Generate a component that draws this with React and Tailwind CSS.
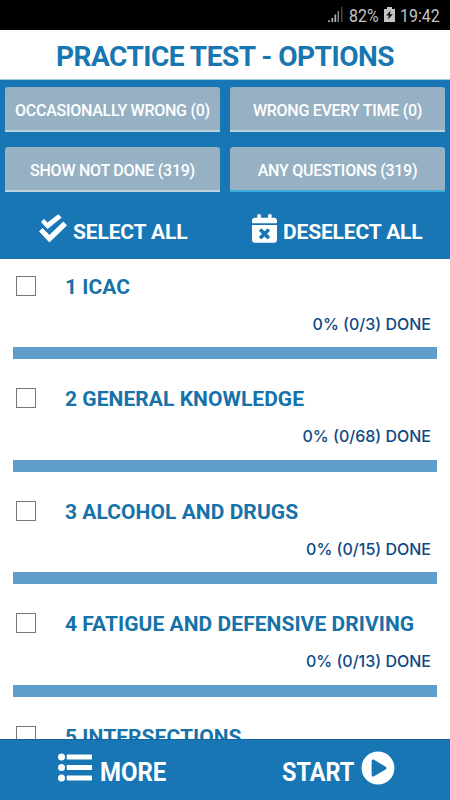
import { FaCalendarTimes, FaPlayCircle } from 'react-icons/fa'
import clsx from 'clsx'

const filters = [
  { label: 'OCCASIONALLY WRONG (0)' },
  { label: 'WRONG EVERY TIME (0)' },
  { label: 'SHOW NOT DONE (319)' },
  { label: 'ANY QUESTIONS (319)', active: true },
]

const topics = [
  { title: '1 ICAC', done: '0% (0/3) DONE' },
  { title: '2 GENERAL KNOWLEDGE', done: '0% (0/68) DONE' },
  { title: '3 ALCOHOL AND DRUGS', done: '0% (0/15) DONE' },
  { title: '4 FATIGUE AND DEFENSIVE DRIVING', done: '0% (0/13) DONE' },
  { title: '5 INTERSECTIONS' },
]

function SignalIcon() {
  return (
    <svg className="w-[15px] h-[15px] shrink-0" viewBox="0 0 15 15">
      <path d="M0 15v-1.5h2V15zM3.5 15v-4h1.7v4zM6.5 15V7.500h1.700V15z" fill="#b5b5b5" />
      <path d="M9.500 15V4h1.500v11z" fill="#858585" />
      <path d="M13 15V0h1.500v15z" fill="#484848" />
    </svg>
  )
}

function BatteryIcon() {
  return (
    <svg className="w-[11px] h-[15px] shrink-0" viewBox="0 0 11 15">
      <path d="M0 2h3V0h5v2h3v13H0z" fill="#c4c4c4" />
      <path d="M6.500 3.500 2.200 8.600h2.600L4 12.500l4.800-5.300H6z" fill="#111" />
    </svg>
  )
}

function DoubleCheckIcon() {
  return (
    <svg className="w-[28px] h-[29px] shrink-0" viewBox="0 0 28 29" fill="currentColor" stroke="currentColor" strokeWidth="1" strokeLinejoin="round">
      <path d="M2.500 7.900 5 5.500 8.500 9 19.300.800 22.100 3.600 8.500 14.600z" />
      <path d="M.500 17.300 3.400 14.600 10.400 21.300 24.400 8.100 27.500 11.400 10.400 27.900z" />
    </svg>
  )
}

function ListIcon() {
  return (
    <svg className="w-[34px] h-[29px] shrink-0" viewBox="0 0 34 29" fill="currentColor">
      <circle cx="3.500" cy="4" r="3.500" />
      <circle cx="3.500" cy="14.500" r="3.500" />
      <circle cx="3.500" cy="25" r="3.500" />
      <rect x="8.700" y="1.500" width="25.300" height="5" rx="0.800" />
      <rect x="8.700" y="12" width="25.300" height="5" rx="0.800" />
      <rect x="8.700" y="22.500" width="25.300" height="5" rx="0.800" />
    </svg>
  )
}

function StatusBar() {
  return (
    <div className="flex h-[30px] shrink-0 bg-black pl-[328px] pt-[7px] text-[18.5px] leading-[18px] text-[#c4c4c4]">
      <SignalIcon />
      <div className="ml-[6px] w-[29px] origin-left scale-x-[0.86]">82%</div>
      <div className="ml-[6px]">
        <BatteryIcon />
      </div>
      <div className="ml-[5px] origin-left scale-x-[0.86]">19:42</div>
    </div>
  )
}

function Filter({ label, active }) {
  return (
    <button
      className={clsx(
        'flex h-[45px] items-center justify-center rounded-t-[3px] border-b-2 bg-[#97b1c4] pt-[5px] text-[16px] font-medium tracking-[-0.26px] whitespace-nowrap text-white',
        active ? 'border-[#3aa9dc]' : 'border-[#bdd0de]',
      )}
    >
      {label}
    </button>
  )
}

function Topic({ title, done }) {
  return (
    <div className="h-[112.5px] shrink-0 pt-[16.5px] pr-[13px] pl-[13px]">
      <div className="flex h-[21px]">
        <div className="ml-[3px] size-[20px] shrink-0 border border-[#777]"></div>
        <div className="ml-[29px] pt-[1px] text-[21px] leading-[21px] font-bold tracking-[0.05px] whitespace-nowrap text-[#1672a8]">{title}</div>
      </div>
      <div className="mt-[17px] h-[20px] pr-[6px] text-right font-['Inter',sans-serif] text-[16px] leading-[20px] font-medium text-[#0d4a82]">{done}</div>
      <div className="mt-[13.2px] h-[12px] bg-[#5f9ecb]"></div>
    </div>
  )
}

function App() {
  return (
    <div className="flex h-[800px] w-[450px] flex-col overflow-hidden bg-white font-['Roboto',sans-serif]">
      <StatusBar />

      <h1 className="flex h-[50px] shrink-0 items-center justify-center border-b border-[#9bc9e2] pt-[5px] text-[28px] font-bold tracking-[-0.5px] whitespace-nowrap text-[#1876b0]">
        PRACTICE TEST - OPTIONS
      </h1>

      <div className="h-[179.4px] shrink-0 bg-[#1876b5] pt-[7px] text-white">
        <div className="grid grid-cols-2 gap-x-[10px] gap-y-[15px] px-[5px]">
          {filters.map((filter) => (
            <Filter key={filter.label} {...filter} />
          ))}
        </div>
        <div className="flex pt-[22px] text-[21px] leading-[36px] font-bold tracking-[-0.15px] whitespace-nowrap">
          <div className="flex w-[225px] pl-[39px]">
            <DoubleCheckIcon />
            <span className="ml-[6px]">SELECT ALL</span>
          </div>
          <div className="flex pl-[27px]">
            <FaCalendarTimes className="h-[29px] w-[25px] shrink-0" />
            <span className="ml-[6px]">DESELECT ALL</span>
          </div>
        </div>
      </div>

      <div className="flex min-h-0 flex-1 flex-col overflow-hidden">
        {topics.map((topic) => (
          <Topic key={topic.title} {...topic} />
        ))}
      </div>

      <div className="flex h-[61px] shrink-0 border-t border-[#10639c] bg-[#1876b5] pt-[11px] text-[25.5px] leading-[43px] font-bold text-white">
        <div className="flex w-[225px] pl-[58px]">
          <div className="pt-[2px]">
            <ListIcon />
          </div>
          <span className="ml-[8px] origin-left scale-x-[0.94]">MORE</span>
        </div>
        <div className="flex pl-[57px]">
          <span className="w-[78.5px] origin-left scale-x-[0.92]">START</span>
          <FaPlayCircle className="size-[34px] shrink-0" />
        </div>
      </div>
    </div>
  )
}

export default App
